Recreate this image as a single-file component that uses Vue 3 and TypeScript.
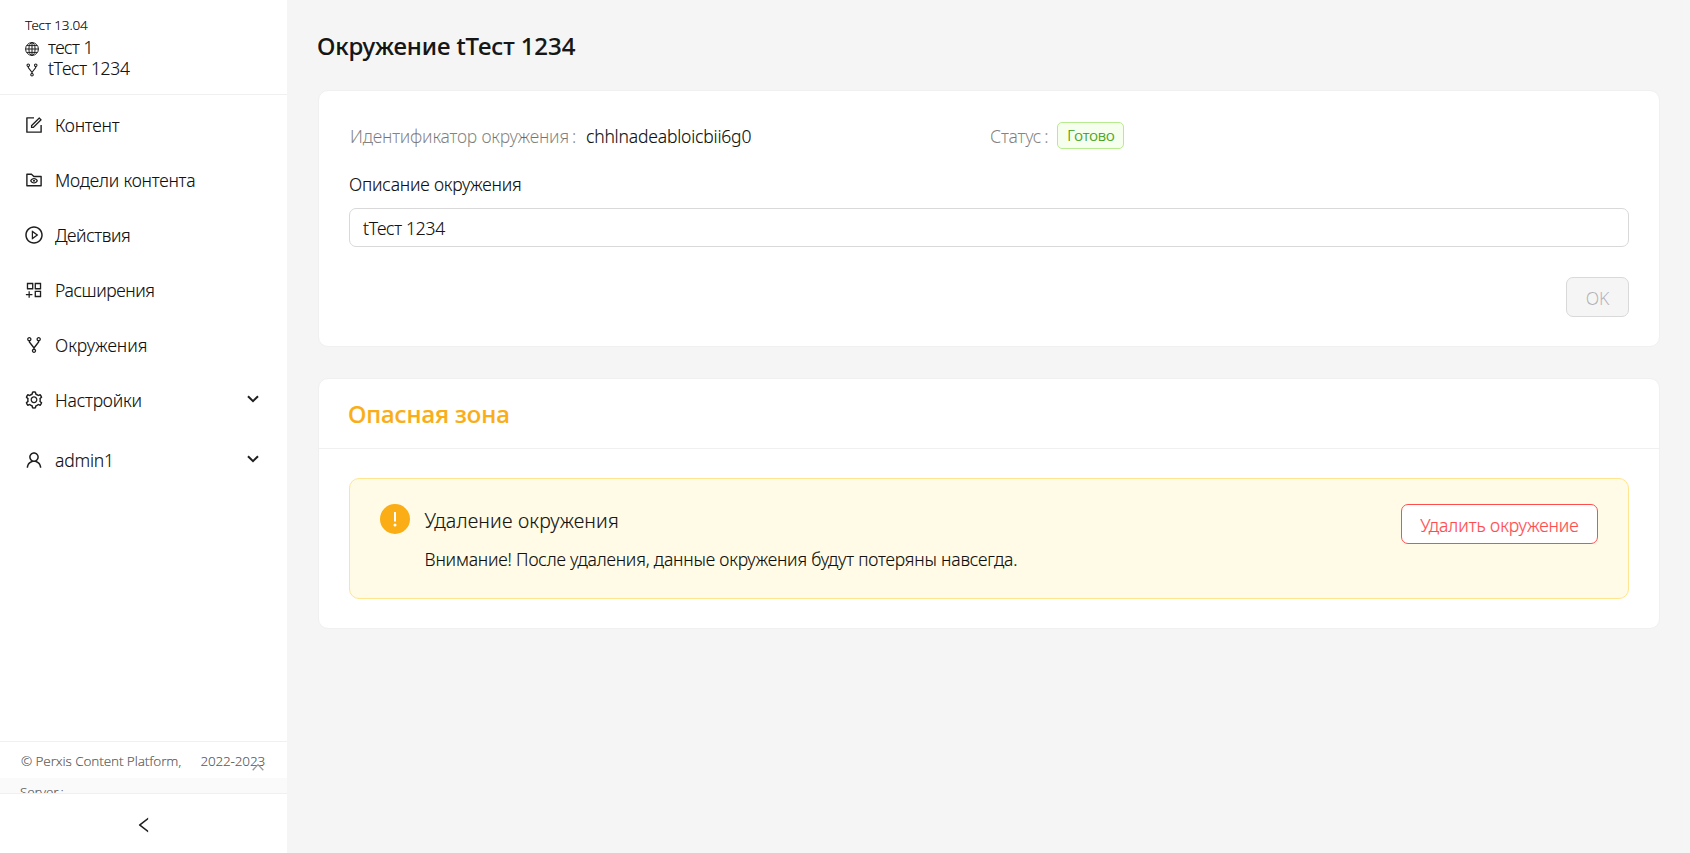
<script setup lang="ts">
import { ref } from 'vue'

interface MenuItem {
  key: string
  label: string
  icon: string[]
  expandable?: boolean
}

const forkIcon = [
  'M752 100c-61.8 0-112 50.2-112 112 0 47.7 29.9 88.5 72 104.6v27.6L512 601.4 312 344.2v-27.6c42.1-16.1 72-56.9 72-104.6 0-61.8-50.2-112-112-112s-112 50.2-112 112c0 50.6 33.8 93.5 80 107.3v34.4c0 9.7 3.3 19.3 9.3 27L476 672.3v33.6c-44.2 15-76 56.9-76 106.1 0 61.8 50.2 112 112 112s112-50.2 112-112c0-49.2-31.8-91-76-106.1v-33.6l226.7-291.6c6-7.7 9.3-17.3 9.3-27v-34.4c46.2-13.8 80-56.7 80-107.3 0-61.8-50.2-112-112-112zM224 212a48.01 48.01 0 0196 0 48.01 48.01 0 01-96 0zm336 600a48.01 48.01 0 01-96 0 48.01 48.01 0 0196 0zm192-552a48.01 48.01 0 010-96 48.01 48.01 0 010 96z',
]

const menu: MenuItem[] = [
  {
    key: 'content',
    label: 'Контент',
    icon: [
      'M904 512h-56c-4.4 0-8 3.6-8 8v320H184V184h320c4.4 0 8-3.6 8-8v-56c0-4.4-3.6-8-8-8H144c-17.7 0-32 14.3-32 32v736c0 17.7 14.3 32 32 32h736c17.7 0 32-14.3 32-32V520c0-4.4-3.6-8-8-8z',
      'M355.9 534.9L354 653.8c-.1 8.9 7.1 16.2 16 16.2h.4l118-2.9c2-.1 4-.9 5.4-2.3l415.9-415c3.1-3.1 3.1-8.2 0-11.3L785.4 114.3c-1.6-1.6-3.6-2.3-5.7-2.3s-4.1.8-5.7 2.3l-415.8 415a8.3 8.3 0 00-2.3 5.6zm63.5 23.6L779.7 199l45.2 45.1-360.5 359.7-45.7 1.1.7-46.4z',
    ],
  },
  {
    key: 'models',
    label: 'Модели контента',
    icon: [
      'M880 298.4H521L403.7 186.2a8.15 8.15 0 00-5.5-2.2H144c-17.7 0-32 14.3-32 32v592c0 17.7 14.3 32 32 32h736c17.7 0 32-14.3 32-32V330.4c0-17.7-14.3-32-32-32zM840 768H184V256h188.5l119.6 114.4H840V768z',
      'M512 409c-91 0-166 56-196 126-5 10-5 22 0 32 30 70 105 126 196 126s166-56 196-126c5-10 5-22 0-32-30-70-105-126-196-126zm0 220c-60 0-109-32-132-78 23-46 72-78 132-78s109 32 132 78c-23 46-72 78-132 78z',
      'M456 551a56 56 0 10112 0 56 56 0 10-112 0z',
    ],
  },
  {
    key: 'automation',
    label: 'Действия',
    icon: [
      'M512 64C264.6 64 64 264.6 64 512s200.6 448 448 448 448-200.6 448-448S759.4 64 512 64zm0 820c-205.4 0-372-166.6-372-372s166.6-372 372-372 372 166.6 372 372-166.6 372-372 372z',
      'M719.4 499.1l-296.1-215A15.9 15.9 0 00398 297v430c0 13.1 14.8 20.5 25.3 12.9l296.1-215a15.9 15.9 0 000-25.8zm-257.6 134V390.9L628.5 512 461.8 633.1z',
    ],
  },
  {
    key: 'extensions',
    label: 'Расширения',
    icon: [
      'M464 144H160c-8.8 0-16 7.2-16 16v304c0 8.8 7.2 16 16 16h304c8.8 0 16-7.2 16-16V160c0-8.8-7.2-16-16-16zm-52 268H212V212h200v200z',
      'M864 144H560c-8.8 0-16 7.2-16 16v304c0 8.8 7.2 16 16 16h304c8.8 0 16-7.2 16-16V160c0-8.8-7.2-16-16-16zm-52 268H612V212h200v200z',
      'M864 544H560c-8.8 0-16 7.2-16 16v304c0 8.8 7.2 16 16 16h304c8.8 0 16-7.2 16-16V560c0-8.8-7.2-16-16-16zm-52 268H612V612h200v200z',
      'M424 712H296V584c0-4.4-3.6-8-8-8h-48c-4.4 0-8 3.6-8 8v128H104c-4.4 0-8 3.6-8 8v48c0 4.4 3.6 8 8 8h128v128c0 4.4 3.6 8 8 8h48c4.4 0 8-3.6 8-8V776h128c4.4 0 8-3.6 8-8v-48c0-4.4-3.6-8-8-8z',
    ],
  },
  { key: 'environments', label: 'Окружения', icon: forkIcon },
  {
    key: 'settings',
    label: 'Настройки',
    expandable: true,
    icon: [
      'M924.8 625.7l-65.5-56c3.1-19 4.7-38.4 4.7-57.8s-1.6-38.8-4.7-57.8l65.5-56a32.03 32.03 0 009.3-35.2l-.9-2.6a443.74 443.74 0 00-79.7-137.9l-1.8-2.1a32.12 32.12 0 00-35.1-9.5l-81.3 28.9c-30-24.6-63.5-44-99.7-57.6l-15.7-85a32.05 32.05 0 00-25.8-25.7l-2.7-.5c-52.1-9.4-106.9-9.4-159 0l-2.7.5a32.05 32.05 0 00-25.8 25.7l-15.8 85.4a351.86 351.86 0 00-99 57.4l-81.9-29.1a32 32 0 00-35.1 9.5l-1.8 2.1a446.02 446.02 0 00-79.7 137.9l-.9 2.6c-4.5 12.5-.8 26.5 9.3 35.2l66.3 56.6c-3.1 18.8-4.6 38-4.6 57.1 0 19.2 1.5 38.4 4.6 57.1L99 625.5a32.03 32.03 0 00-9.3 35.2l.9 2.6c18.1 50.4 44.9 96.9 79.7 137.9l1.8 2.1a32.12 32.12 0 0035.1 9.5l81.9-29.1c29.8 24.5 63.1 43.9 99 57.4l15.8 85.4a32.05 32.05 0 0025.8 25.7l2.7.5a449.4 449.4 0 00159 0l2.7-.5a32.05 32.05 0 0025.8-25.7l15.7-85a350 350 0 0099.7-57.6l81.3 28.9a32 32 0 0035.1-9.5l1.8-2.1c34.8-41.1 61.6-87.5 79.7-137.9l.9-2.6c4.5-12.3.8-26.3-9.3-35zM788.3 465.9c2.5 15.1 3.8 30.6 3.8 46.1s-1.3 31-3.8 46.1l-6.6 40.1 74.7 63.9a370.03 370.03 0 01-42.6 73.6L721 702.8l-31.4 25.8c-23.9 19.6-50.5 35-79.3 45.8l-38.1 14.3-17.9 97a377.5 377.5 0 01-85 0l-17.9-97.2-37.8-14.5c-28.5-10.8-55-26.2-78.7-45.7l-31.4-25.9-93.4 33.2c-17-22.9-31.2-47.6-42.6-73.6l75.5-64.5-6.5-40c-2.4-14.9-3.7-30.3-3.7-45.5 0-15.3 1.2-30.6 3.7-45.5l6.5-40-75.5-64.5c11.3-26.1 25.6-50.7 42.6-73.6l93.4 33.2 31.4-25.9c23.7-19.5 50.2-34.9 78.7-45.7l37.9-14.3 17.9-97.2c28.1-3.2 56.8-3.2 85 0l17.9 97 38.1 14.3c28.7 10.8 55.4 26.2 79.3 45.8l31.4 25.8 92.8-32.9c17 22.9 31.2 47.6 42.6 73.6L781.8 426l6.5 39.9z',
      'M512 326c-97.2 0-176 78.8-176 176s78.8 176 176 176 176-78.8 176-176-78.8-176-176-176zm79.2 255.2A111.6 111.6 0 01512 614c-29.9 0-58-11.7-79.2-32.8A111.6 111.6 0 01400 502c0-29.9 11.7-58 32.8-79.2C454 401.6 482.1 390 512 390c29.9 0 58 11.6 79.2 32.8A111.6 111.6 0 01624 502c0 29.9-11.7 58-32.8 79.2z',
    ],
  },
  {
    key: 'user',
    label: 'admin1',
    expandable: true,
    icon: [
      'M858.5 763.6a374 374 0 00-80.6-119.5 375.63 375.63 0 00-119.5-80.6c-.4-.2-.8-.3-1.2-.5C719.5 518 760 444.7 760 362c0-137-111-248-248-248S264 225 264 362c0 82.7 40.5 156 102.8 201.1-.4.2-.8.3-1.2.5-44.8 18.9-85 46-119.5 80.6a375.63 375.63 0 00-80.6 119.5A371.7 371.7 0 00136 901.8a8 8 0 008 8.2h60c4.4 0 7.9-3.5 8-7.8 2-77.2 33-149.5 87.8-204.3 56.7-56.7 132-87.9 212.2-87.9s155.5 31.2 212.2 87.9C779 752.7 810 825 812 902.2c.1 4.4 3.6 7.8 8 7.8h60a8 8 0 008-8.2c-1-47.8-10.9-94.3-29.5-138.2zM512 534c-45.9 0-89.1-17.9-121.6-50.4S340 407.9 340 362c0-45.9 17.9-89.1 50.4-121.6S466.1 190 512 190s89.1 17.9 121.6 50.4S684 316.1 684 362c0 45.9-17.9 89.1-50.4 121.6S557.9 534 512 534z',
    ],
  },
]

const description = ref('tТест 1234')
</script>

<template>
  <div class="layout">
    <aside class="sider">
      <header class="space">
        <div class="space-org">Тест 13.04</div>
        <div class="space-row">
          <svg class="space-icon globe" viewBox="0 0 16 16">
            <circle cx="8" cy="8" r="6.4" />
            <ellipse cx="8" cy="8" rx="3.1" ry="6.4" />
            <path d="M8 1.6v12.8M1.6 8h12.8M2.8 4.6h10.4M2.8 11.4h10.4" />
          </svg>
          <span class="space-name">тест 1</span>
        </div>
        <div class="space-row">
          <svg class="space-icon" viewBox="0 0 1024 1024"><path :d="forkIcon[0]" /></svg>
          <span class="env-name">tТест 1234</span>
        </div>
      </header>

      <nav class="menu">
        <a v-for="item in menu" :key="item.key" class="menu-item" :class="item.key">
          <svg class="menu-icon" viewBox="0 0 1024 1024">
            <path v-for="(d, i) in item.icon" :key="i" :d="d" />
          </svg>
          <span class="menu-label">{{ item.label }}</span>
          <svg v-if="item.expandable" class="menu-arrow" viewBox="0 0 12 8">
            <path d="M1 1.2l5 5 5-5" />
          </svg>
        </a>
      </nav>

      <footer class="about">
        <div class="about-row">
          <span class="about-name">© Perxis Content Platform,</span>
          <span class="about-years">2022-2023</span>
          <svg class="about-arrow" viewBox="0 0 12 8"><path d="M.7 7.2L6 1.6l5.3 5.6" /></svg>
        </div>
        <div class="server-row">Server<span class="server-colon">:</span></div>
      </footer>

      <button class="collapse" aria-label="Свернуть меню">
        <svg viewBox="0 0 1024 1024">
          <path
            d="M724 218.3V141c0-6.7-7.7-10.4-12.9-6.3L260.3 486.8a31.86 31.86 0 000 50.3l450.8 352.1c5.3 4.1 12.9.4 12.9-6.3v-77.3c0-4.9-2.3-9.6-6.1-12.6l-360-281 360-281.1c3.8-3 6.1-7.7 6.1-12.6z"
          />
        </svg>
      </button>
    </aside>

    <main class="page">
      <h1 class="title">Окружение tТест 1234</h1>

      <section class="card info">
        <div class="details">
          <div class="detail">
            <span class="detail-label">Идентификатор окружения</span><span class="colon">:</span>
            <span class="detail-value">chhlnadeabloicbii6g0</span>
          </div>
          <div class="detail">
            <span class="detail-label">Статус</span><span class="colon">:</span>
            <span class="tag">Готово</span>
          </div>
        </div>
        <label class="field-label" for="description">Описание окружения</label>
        <input id="description" v-model="description" class="field" type="text" />
        <div class="form-actions"><button class="ok" disabled>OK</button></div>
      </section>

      <section class="card danger">
        <h2 class="danger-title">Опасная зона</h2>
        <div class="danger-body">
          <div class="alert">
            <svg class="alert-icon" viewBox="0 0 30 30">
              <circle cx="15" cy="15" r="15" />
              <path d="M14 8h2v9.4h-2z" />
              <circle class="dot" cx="15" cy="21" r="1.5" />
            </svg>
            <div class="alert-text">
              <div class="alert-title">Удаление окружения</div>
              <div class="alert-message">
                Внимание! После удаления, данные окружения будут потеряны навсегда.
              </div>
            </div>
            <button class="delete">Удалить окружение</button>
          </div>
        </div>
      </section>
    </main>
  </div>
</template>

<style>
body {
  overflow: hidden;
}
</style>

<style scoped>
.layout,
.layout * {
  box-sizing: border-box;
}
.layout {
  display: flex;
  height: 100vh;
  background: #f5f5f5;
  color: rgba(0, 0, 0, 0.92);
  font-family: 'Segoe UI', 'Noto Sans', 'Open Sans', sans-serif;
  font-size: 17.5px;
  font-weight: 300;
  letter-spacing: -0.19px;
  line-height: 28px;
  -webkit-text-stroke: 0.2px currentColor;
}
svg {
  display: block;
  flex: none;
  fill: #1f1f1f;
}
button,
input {
  margin: 0;
  font: inherit;
  letter-spacing: inherit;
}

.sider {
  display: flex;
  flex-direction: column;
  width: 287px;
  background: #fff;
}
.space {
  height: 95px;
  padding: 14px 24px 0;
  border-bottom: 1px solid #f0f0f0;
}
.space-org {
  padding-left: 1px;
  font-size: 13.5px;
  line-height: 22px;
  letter-spacing: -0.15px;
}
.space-row {
  display: flex;
  align-items: center;
  gap: 8px;
  height: 21px;
  line-height: 21px;
}
.space-row:nth-child(2) {
  margin-top: 1px;
}
.space-icon {
  width: 16px;
  height: 16px;
  margin-top: 3px;
}
.globe {
  fill: none;
  stroke: #1f1f1f;
  stroke-width: 1;
}
.space-name {
  letter-spacing: -0.5px;
}
.env-name {
  letter-spacing: -0.33px;
}

.menu {
  flex: 1;
  padding-top: 3px;
}
.menu-item {
  display: flex;
  align-items: center;
  height: 55px;
  padding: 0 28px 0 24px;
}
.menu-icon {
  width: 20px;
  height: 20px;
  margin: -1px 11px 0 0;
}
.menu-label {
  margin-top: -1px;
}
.extensions .menu-label,
.automation .menu-label {
  letter-spacing: -0.4px;
}
.environments .menu-label {
  letter-spacing: 0;
}
.menu-item.user {
  margin-top: 5px;
}
.menu-arrow {
  width: 12px;
  height: 8px;
  margin: -4px 0 0 auto;
  fill: none;
  stroke: #1f1f1f;
  stroke-width: 2;
}

.about {
  height: 52px;
  overflow: hidden;
  border-top: 1px solid #f0f0f0;
  color: rgba(0, 0, 0, 0.6);
  font-size: 13.5px;
  letter-spacing: -0.12px;
}
.about-row {
  position: relative;
  display: flex;
  justify-content: space-between;
  height: 36px;
  padding: 0 22px 0 21px;
  line-height: 38px;
}
.about-years {
  letter-spacing: -0.16px;
}
.about-arrow {
  position: absolute;
  right: 23px;
  top: 21px;
  width: 12px;
  height: 8px;
  fill: none;
  stroke: #999;
  stroke-width: 1.3;
}
.server-row {
  padding-left: 20px;
  background: #fafafa;
  line-height: 28px;
}
.server-colon {
  margin-left: 2px;
}
.collapse {
  display: flex;
  align-items: center;
  justify-content: center;
  height: 60px;
  padding: 0;
  border: 0;
  border-top: 1px solid #f0f0f0;
  background: #fff;
}
.collapse svg {
  width: 20px;
  height: 20px;
  margin-top: 2px;
}

.page {
  flex: 1;
  padding: 28px 30px 0 31px;
}
.title {
  margin: 0 0 26px -1px;
  font-size: 24px;
  font-weight: 500;
  line-height: 36px;
  letter-spacing: -0.1px;
}
.card {
  border: 1px solid #f0f0f0;
  border-radius: 10px;
  background: #fff;
}
.info {
  height: 257px;
  padding: 31px 30px 0;
}
.details {
  display: grid;
  grid-template-columns: 640px 1fr;
}
.detail {
  display: flex;
  align-items: center;
  height: 28px;
  padding-left: 1px;
}
.detail-label,
.colon {
  color: rgba(0, 0, 0, 0.45);
}
.detail-value {
  margin-left: 10px;
}
.colon {
  margin-left: 3px;
}
.tag {
  height: 27px;
  margin: -1px 0 0 9px;
  padding: 0 9px;
  border: 1px solid #b7eb8f;
  border-radius: 5px;
  background: #f6ffed;
  color: #389e0d;
  font-size: 15px;
  line-height: 25px;
  letter-spacing: -0.05px;
}
.field-label {
  display: block;
  margin-top: 20px;
}
.field {
  display: block;
  width: 100%;
  height: 39px;
  margin-top: 10px;
  padding: 1px 13px 0;
  border: 1px solid #d9d9d9;
  border-radius: 7px;
  outline: none;
  background: #fff;
  color: inherit;
  letter-spacing: -0.3px;
}
.form-actions {
  display: flex;
  justify-content: flex-end;
  margin-top: 30px;
}
.ok,
.delete {
  height: 40px;
  padding: 1px 10px 0;
  border: 1px solid #d9d9d9;
  border-radius: 7px;
}
.ok {
  width: 63px;
  background: #f5f5f5;
  color: rgba(0, 0, 0, 0.25);
}
.danger {
  height: 251px;
  margin-top: 31px;
}
.danger-title {
  height: 70px;
  margin: 0;
  padding: 0 29px;
  border-bottom: 1px solid #f0f0f0;
  color: #faad14;
  font-size: 24px;
  font-weight: 500;
  line-height: 69px;
  letter-spacing: -0.1px;
}
.danger-body {
  padding: 29px 30px;
}
.alert {
  display: flex;
  align-items: flex-start;
  height: 121px;
  padding: 25px 30px 0;
  border: 1px solid #ffe58f;
  border-radius: 10px;
  background: #fffbe6;
}
.alert-icon {
  width: 30px;
  height: 30px;
  fill: #faad14;
}
.alert-icon path,
.alert-icon .dot {
  fill: #fff;
}
.alert-text {
  flex: 1;
  padding-left: 14.5px;
}
.alert-title {
  height: 34px;
  font-size: 19.5px;
  line-height: 34px;
  letter-spacing: 0.18px;
}
.alert-message {
  margin-top: 7px;
  letter-spacing: -0.175px;
}
.delete {
  width: 197px;
  border-color: #ff4d4f;
  background: #fff;
  color: #ff4d4f;
  letter-spacing: -0.05px;
}
</style>
